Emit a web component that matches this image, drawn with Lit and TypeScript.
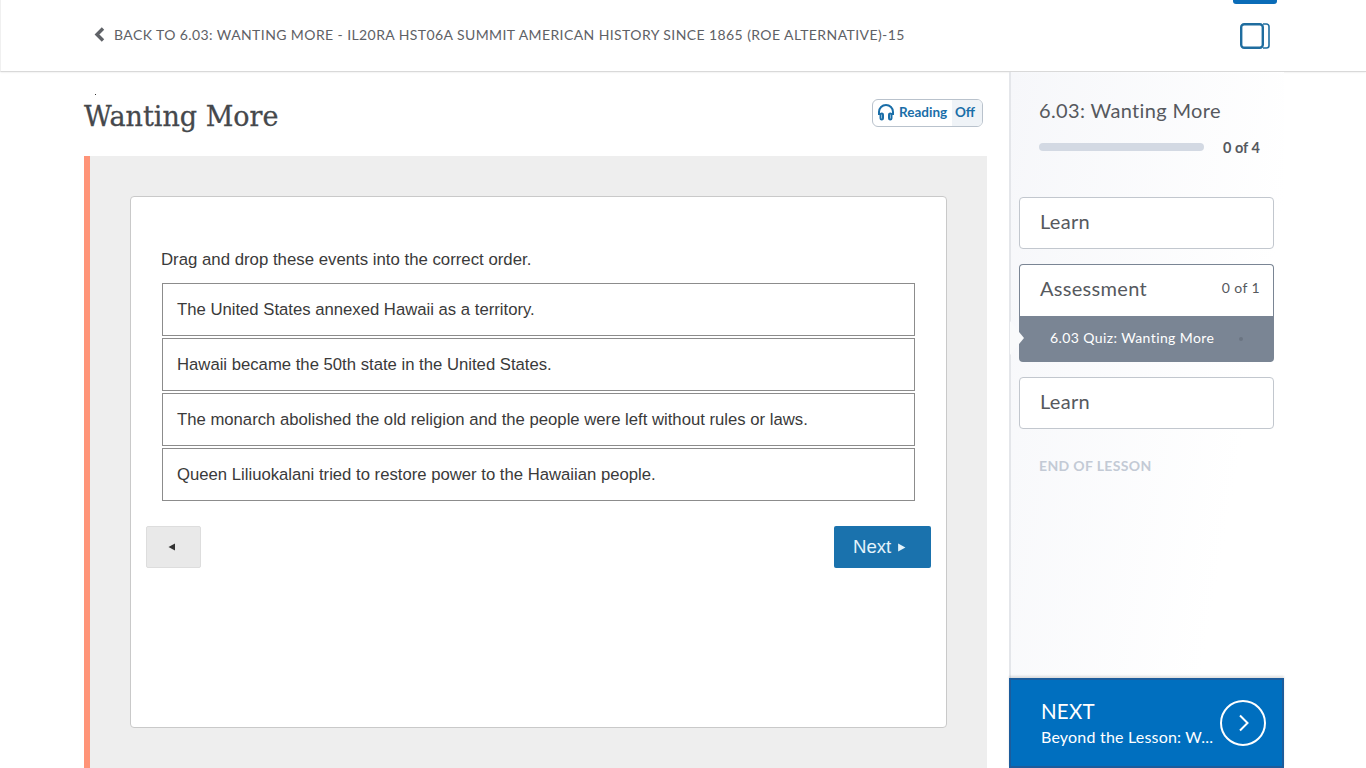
import { LitElement, html, css } from "lit";
import { customElement } from "lit/decorators.js";

const ITEMS = [
  "The United States annexed Hawaii as a territory.",
  "Hawaii became the 50th state in the United States.",
  "The monarch abolished the old religion and the people were left without rules or laws.",
  "Queen Liliuokalani tried to restore power to the Hawaiian people.",
];

@customElement("app-root")
export class AppRoot extends LitElement {
  static styles = css`
    :host { display: block; width: 1366px; height: 768px; overflow: hidden; background: #fff; font-family: Lato, "Open Sans", sans-serif; color: #56595e; }
    * { box-sizing: border-box; }
    header { position: relative; height: 72px; display: flex; align-items: center; padding: 0 96px 2px 93px; border-bottom: 1px solid #d9d9d9; box-shadow: 0 0 2px rgba(0,0,0,.12); border-left: 1px solid #f0f0f0; }
    .tab { position: absolute; top: 0; left: 1232px; width: 44px; height: 4px; background: #0a6cb8; border-radius: 0 0 3px 3px; }
    .back { display: flex; align-items: center; gap: 9px; font-size: 14px; letter-spacing: .41px; color: #5e6166; flex: 1; white-space: nowrap; }
    .back svg { display: block; }
    .panelicon { margin-top: 3px; }
    .main { display: flex; height: 696px; }
    .left { width: 1009px; flex: none; padding-left: 84px; padding-right: 22px; display: flex; flex-direction: column; }
    .title-row { position: relative; height: 84px; display: flex; align-items: center; justify-content: space-between; padding: 4px 4px 0 0; }
    .speck { position: absolute; left: 11px; top: 22px; width: 1px; height: 1px; background: #333; }
    h1 { margin: 0; font-family: "DejaVu Serif", serif; font-weight: 400; font-size: 27px; -webkit-text-stroke: .3px #45484c; color: #45484c; }
    .reading { display: flex; align-items: center; height: 28px; width: 111px; border: 1px solid #b9c2cc; border-radius: 6px; color: #1a6ea8; font-weight: 700; overflow: hidden; margin-top: -6px; }
    .reading .a { display: flex; align-items: center; gap: 4px; flex: 1; padding: 0 0 2px 4px; height: 100%; font-size: 13.5px; }
    .reading .b { width: 30px; height: 100%; background: #eff3f7; display: flex; align-items: center; justify-content: center; font-size: 13.5px; padding: 0 4px 2px 0; }
    .panel { flex: 1; background: #eee; border-left: 6px solid #ff9478; padding: 40px; }
    .card { height: 532px; background: #fff; border: 1px solid #c9c9c9; border-radius: 4px; padding: 51px 15px 0 15px; font-family: "Liberation Sans", Arial, sans-serif; color: #3a3a3a; display: flex; flex-direction: column; }
    .q { font-size: 16.8px; line-height: 24px; padding-left: 15px; margin-bottom: 11px; }
    .list { display: flex; flex-direction: column; gap: 2px; margin: 0 16px; }
    .item { height: 53px; border: 1px solid #8c8c8c; display: flex; align-items: center; padding-left: 14px; font-size: 16.7px; }
    .btns { display: flex; justify-content: space-between; margin-top: 25px; }
    .prev { width: 55px; height: 42px; background: #e9e9e9; border: 1px solid #ddd; border-radius: 2px; display: flex; align-items: center; justify-content: center; padding-right: 4px; }
    .next { width: 97px; height: 42px; background: #1a72ad; border-radius: 2px; color: #e3f3fb; font-size: 18.6px; display: flex; align-items: center; gap: 6px; padding-left: 19px; }
    aside { position: relative; width: 275px; flex: none; border-left: 2px solid #e4e6ea; background: linear-gradient(100deg, #f6f7fa 0%, #fff 75%); display: flex; flex-direction: column; padding-top: 25px; }
    .unit { font-size: 20px; line-height: 26px; letter-spacing: .35px; padding-left: 28px; }
    .prog { display: flex; align-items: center; padding-left: 28px; margin-top: 13px; height: 22px; }
    .bar { width: 165px; height: 8px; border-radius: 4px; background: #d3d9e3; }
    .prog span { margin-left: 19px; font-size: 14.5px; font-weight: 700; }
    .mods { display: flex; flex-direction: column; gap: 15px; padding: 39px 10px 0 8px; }
    .mod { height: 52px; border: 1px solid #c2c7ce; border-radius: 4px; background: #fff; display: flex; align-items: center; padding: 0 0 5px 20px; font-size: 20px; letter-spacing: .3px; }
    .mod.open { display: block; height: 98px; padding: 0; border: 0; position: relative; }
    .mod .h { height: 52px; border: 1px solid #7a8594; border-bottom: 0; border-radius: 4px 4px 0 0; display: flex; align-items: center; justify-content: space-between; padding: 0 13px 6px 20px; }
    .mod .h small { font-size: 14px; letter-spacing: .4px; }
    .mod .q2 { position: relative; height: 46px; background: #7a8594; border-radius: 0 0 4px 4px; color: #fff; font-size: 14px; letter-spacing: .4px; display: flex; align-items: center; padding: 0 0 3px 31px; }
    .notch { position: absolute; left: -9px; top: 5px; }
    .dot { position: absolute; left: 220px; top: 21px; width: 4px; height: 4px; border-radius: 50%; background: #6b7582; }
    .end { margin: 28px 0 0 28px; font-size: 14px; font-weight: 700; letter-spacing: .36px; color: #c3cad5; line-height: 18px; }
    .nextbar { position: absolute; left: -2px; right: 0; bottom: 0; height: 90px; background: #006fbf; border: 2px solid #1c5c9c; box-shadow: 0 -2px 2px rgba(0,0,0,.12); color: #fff; display: flex; align-items: center; padding-left: 30px; }
    .nextbar .t { width: 179px; white-space: nowrap; }
    .nextbar .l1 { font-size: 20.5px; line-height: 26px; letter-spacing: .2px; }
    .nextbar .l2 { font-size: 16px; line-height: 22px; letter-spacing: .2px; margin-top: 2px; }
    .circle { width: 46px; height: 46px; flex: none; }
  `;

  render() {
    return html`
      <header>
        <div class="tab"></div>
        <div class="back">
          <svg width="11" height="15" viewBox="0 0 11 15"><path d="M9 1.5 3 7.5l6 6" fill="none" stroke="#606368" stroke-width="3.4"/></svg>
          <span>BACK TO 6.03: WANTING MORE - IL20RA HST06A SUMMIT AMERICAN HISTORY SINCE 1865 (ROE ALTERNATIVE)-15</span>
        </div>
        <svg class="panelicon" width="30" height="26" viewBox="0 0 30 26" fill="none" stroke="#1f6d9f"><rect x="1.2" y="1.2" width="21.6" height="23.6" rx="3" stroke-width="2.4"/><path d="M23 1h3.5a2.5 2.5 0 0 1 2.5 2.5v19a2.5 2.5 0 0 1-2.5 2.5H23" stroke-width="1.6"/></svg>
      </header>
      <div class="main">
        <div class="left">
          <div class="title-row">
            <i class="speck"></i>
            <h1>Wanting More</h1>
            <div class="reading">
              <div class="a">
                <svg width="18" height="18" viewBox="0 0 18 18" fill="none" stroke="#1a6ea8" stroke-width="2"><path d="M2 12V9a7 7 0 0 1 14 0v3"/><rect x="3.5" y="10.5" width="2.5" height="6" rx="1.2"/><rect x="12" y="10.5" width="2.5" height="6" rx="1.2"/></svg>
                <span>Reading</span>
              </div>
              <div class="b">Off</div>
            </div>
          </div>
          <div class="panel">
            <div class="card">
              <div class="q">Drag and drop these events into the correct order.</div>
              <div class="list">${ITEMS.map((t) => html`<div class="item">${t}</div>`)}</div>
              <div class="btns">
                <div class="prev"><svg width="8" height="8" viewBox="0 0 8 8"><path d="M7 0.5v7L0.5 4z" fill="#333"/></svg></div>
                <div class="next">Next <svg width="9" height="9" viewBox="0 0 8 8"><path d="M1 0.5v7L7.5 4z" fill="#e3f3fb"/></svg></div>
              </div>
            </div>
          </div>
        </div>
        <aside>
          <div class="unit">6.03: Wanting More</div>
          <div class="prog"><div class="bar"></div><span>0 of 4</span></div>
          <div class="mods">
            <div class="mod">Learn</div>
            <div class="mod open">
              <div class="h"><span>Assessment</span><small>0 of 1</small></div>
              <div class="q2">
                <svg class="notch" width="15" height="34" viewBox="0 0 15 34"><path d="M0 0 14 17 0 34z" fill="#f9fafb"/></svg>
                6.03 Quiz: Wanting More<i class="dot"></i>
              </div>
            </div>
            <div class="mod">Learn</div>
          </div>
          <div class="end">END OF LESSON</div>
          <div class="nextbar">
            <div class="t"><div class="l1">NEXT</div><div class="l2">Beyond the Lesson: W...</div></div>
            <svg class="circle" viewBox="0 0 46 46" fill="none" stroke="#fff" stroke-width="2"><circle cx="23" cy="23" r="22"/><path d="M20 15.5 27.5 23 20 30.5"/></svg>
          </div>
        </aside>
      </div>
    `;
  }
}
